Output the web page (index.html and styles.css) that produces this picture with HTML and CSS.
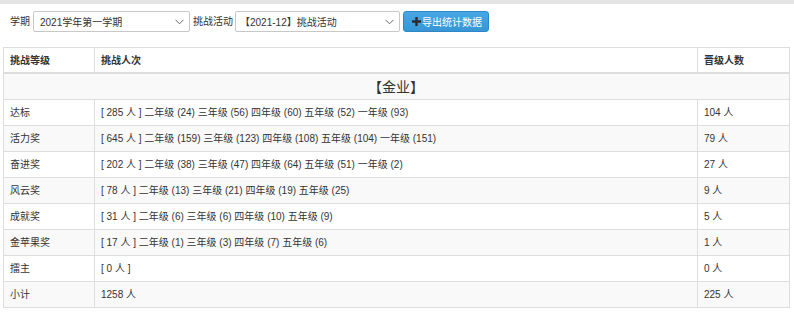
FILE: index.html
```html
<!DOCTYPE html>
<html lang="zh-CN">
<head>
<meta charset="utf-8">
<title>挑战统计</title>
<link rel="stylesheet" href="styles.css">
</head>
<body>
<div class="topbar"></div>
<div class="page">
  <div class="toolbar">
    <span class="label">学期</span>
    <div class="select sel-term"><span>2021学年第一学期</span><svg class="chev" width="9" height="6" viewBox="0 0 9 6"><path d="M0.5 0.8 L4.5 4.8 L8.5 0.8" fill="none" stroke="#666" stroke-width="1"/></svg></div>
    <span class="label label-act">挑战活动</span>
    <div class="select sel-act"><span>【2021-12】挑战活动</span><svg class="chev" width="9" height="6" viewBox="0 0 9 6"><path d="M0.5 0.8 L4.5 4.8 L8.5 0.8" fill="none" stroke="#666" stroke-width="1"/></svg></div>
    <button class="btn"><svg class="plus" width="9" height="9" viewBox="0 0 9 9"><path d="M3.3 0H5.7V3.3H9V5.7H5.7V9H3.3V5.7H0V3.3H3.3Z" fill="#2b2b2b"/></svg>导出统计数据</button>
  </div>
  <table class="stats">
    <thead>
      <tr><th class="c1">挑战等级</th><th class="c2">挑战人次</th><th class="c3">晋级人数</th></tr>
    </thead>
    <tbody>
      <tr><td colspan="3" class="group">【金业】</td></tr>
      <tr><td>达标</td><td>[ 285 人 ] 二年级 (24) 三年级 (56) 四年级 (60) 五年级 (52) 一年级 (93)</td><td>104 人</td></tr>
      <tr><td>活力奖</td><td>[ 645 人 ] 二年级 (159) 三年级 (123) 四年级 (108) 五年级 (104) 一年级 (151)</td><td>79 人</td></tr>
      <tr><td>奋进奖</td><td>[ 202 人 ] 二年级 (38) 三年级 (47) 四年级 (64) 五年级 (51) 一年级 (2)</td><td>27 人</td></tr>
      <tr><td>风云奖</td><td>[ 78 人 ] 二年级 (13) 三年级 (21) 四年级 (19) 五年级 (25)</td><td>9 人</td></tr>
      <tr><td>成就奖</td><td>[ 31 人 ] 二年级 (6) 三年级 (6) 四年级 (10) 五年级 (9)</td><td>5 人</td></tr>
      <tr><td>金苹果奖</td><td>[ 17 人 ] 二年级 (1) 三年级 (3) 四年级 (7) 五年级 (6)</td><td>1 人</td></tr>
      <tr><td>擂主</td><td>[ 0 人 ]</td><td>0 人</td></tr>
      <tr><td>小计</td><td>1258 人</td><td>225 人</td></tr>
    </tbody>
  </table>
</div>
</body>
</html>
```

FILE: styles.css
```css
html, body {
  margin: 0;
  padding: 0;
  background: #fff;
}
body {
  font-family: "Liberation Sans", "Noto Sans CJK SC", sans-serif;
  font-size: 10px;
  color: #333;
}
.topbar {
  height: 4px;
  background: #e3e3e3;
}
.page {
  padding: 7px 5px 0 3px;
}
.toolbar {
  display: flex;
  align-items: center;
  height: 21px;
  padding-left: 7px;
}
.label {
  font-size: 10px;
  color: #333;
  margin-right: 3px;
  line-height: 21px;
}
.label-act { margin-right: 2px; }
.select {
  box-sizing: border-box;
  height: 21px;
  border: 1px solid #c8c8c8;
  border-radius: 2px;
  background: #fff;
  display: flex;
  align-items: center;
  justify-content: space-between;
  padding: 0 5px 0 6px;
  font-size: 10px;
  color: #333;
  margin-right: 3px;
}
.sel-term { width: 157px; }
.sel-act { width: 165px; padding-left: 4px; }
.chev { flex: none; }
.btn {
  box-sizing: border-box;
  height: 21px;
  width: 86px;
  border: 1px solid #2e87c7;
  border-radius: 3px;
  background: linear-gradient(#47a7e4, #3796d6);
  color: #fff;
  font-family: "Liberation Sans", "Noto Sans CJK SC", sans-serif;
  font-size: 10px;
  display: flex;
  align-items: center;
  padding: 0 0 0 8px;
  gap: 1px;
  cursor: pointer;
  white-space: nowrap;
}
.plus { flex: none; }
.stats {
  margin-top: 15px;
  width: 787px;
  border-collapse: collapse;
  border: 1px solid #ddd;
}
.stats th, .stats td {
  border: 1px solid #ddd;
  padding: 4px 7px 4px 6px;
  line-height: 17px;
  text-align: left;
  vertical-align: middle;
  font-size: 10px;
}
.stats th {
  font-weight: bold;
  border-bottom-width: 2px;
  padding-bottom: 3px;
}
.stats .c1 { width: 77px; }
.stats .c3 { width: 78px; }
.stats tbody tr:nth-child(odd) {
  background: #f9f9f9;
}
.stats td.group {
  text-align: center;
  font-size: 14px;
  font-family: "Noto Sans CJK SC", sans-serif;
}
```
